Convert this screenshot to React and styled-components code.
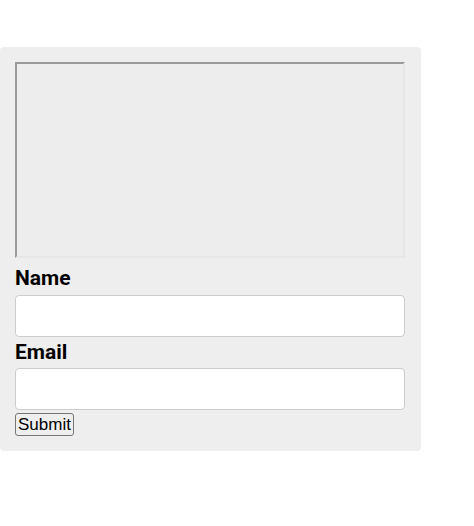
import React from 'react'
import styled, { createGlobalStyle } from 'styled-components'

const GlobalStyle = createGlobalStyle`
  body {
    margin: 0;
    background: #fff;
    font-family: Roboto, "Liberation Sans", Arial, sans-serif;
  }
`

const Panel = styled.form`
  box-sizing: border-box;
  display: flex;
  flex-direction: column;
  width: 421px;
  margin-top: 47px;
  padding: 15px 16px 15px 15px;
  background: #eeeeee;
  border-radius: 4px;
`

const Preview = styled.div`
  box-sizing: border-box;
  height: 196px;
  border-style: solid;
  border-width: 2px;
  border-color: #9a9a9a #e6e6e6 #e6e6e6 #9a9a9a;
  background: #ededed;
  margin-bottom: 6px;
`

const Label = styled.label`
  display: block;
  font-size: 21px;
  font-weight: 700;
  line-height: 24px;
  color: #000;
  margin: ${(p) => (p.$first ? '2px 0 5px' : '3px 0 4px')};
`

const Input = styled.input`
  box-sizing: border-box;
  width: 100%;
  height: 42px;
  border: 1px solid #cccccc;
  border-radius: 4px;
  background: #fff;
  font-size: 16px;
  padding: 0 10px;
`

const SubmitButton = styled.button`
  align-self: flex-start;
  margin-top: 3px;
  height: 23px;
  padding: 0 2px;
  font-family: "Liberation Sans", Arial, sans-serif;
  font-size: 17px;
  color: #000;
  background: #efefef;
  border: 1px solid #767676;
  border-radius: 3px;
`

export default function App() {
  return (
    <>
      <GlobalStyle />
      <Panel onSubmit={(e) => e.preventDefault()}>
        <Preview />
        <Label $first htmlFor="name">Name</Label>
        <Input id="name" type="text" />
        <Label htmlFor="email">Email</Label>
        <Input id="email" type="email" />
        <SubmitButton type="submit">Submit</SubmitButton>
      </Panel>
    </>
  )
}
